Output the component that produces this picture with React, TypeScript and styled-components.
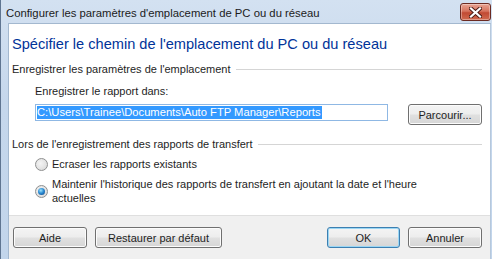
import { createGlobalStyle } from "styled-components";
import styled from "styled-components";

const GlobalStyle = createGlobalStyle`
  html, body {
    margin: 0;
    padding: 0;
    background: #ffffff;
  }
  body {
    font-family: "Liberation Sans", Arial, sans-serif;
    font-size: 11px;
    color: #1e1e1e;
  }
`;

const Window = styled.div`
  width: 492px;
  height: 259px;
  box-sizing: border-box;
  overflow: hidden;
  display: flex;
  flex-direction: column;
  background: linear-gradient(180deg, #d3e1f1 0%, #c5d7ec 40%, #c2d5eb 100%);
  border-left: 1px solid #5f7591;
  padding: 0 1px 0 7px;
`;

const TitleBar = styled.div`
  height: 23px;
  flex-shrink: 0;
  display: flex;
  align-items: center;
  justify-content: space-between;
  margin-left: -2px;
`;

const Title = styled.span`
  font-size: 11.3px;
  color: #1b1b1b;
  padding-top: 2px;
`;

const CloseButton = styled.div`
  width: 29px;
  height: 16px;
  margin-top: 1px;
  border: 1px solid #6b2a22;
  border-radius: 3px;
  display: flex;
  align-items: center;
  justify-content: center;
  background: linear-gradient(180deg, #e8a493 0%, #d6735d 45%, #c14a33 55%, #d06a4f 100%);
  box-shadow: inset 0 0 0 1px rgba(255, 255, 255, 0.35);
`;

const Content = styled.div`
  flex: 1;
  display: flex;
  flex-direction: column;
  background: #ffffff;
  border: 1px solid #a3b8cf;
  border-bottom: none;
  border-right-color: #b6c8dc;
`;

const Main = styled.div`
  flex: 1;
  display: flex;
  flex-direction: column;
  padding: 10px 8px 0 3px;
`;

const Heading = styled.h1`
  margin: 0 0 8px;
  font-weight: normal;
  font-size: 14.6px;
  line-height: 20px;
  color: #003399;
`;

const GroupHeader = styled.div`
  display: flex;
  align-items: center;
  gap: 5px;
  height: 14px;
  &::after {
    content: "";
    flex: 1;
    height: 1px;
    background: #d5d5d5;
    margin-top: 1px;
  }
`;

const Indent = styled.div<{ $top: number }>`
  display: flex;
  flex-direction: column;
  padding-left: 23px;
  margin-top: ${(p) => p.$top}px;
`;

const FieldLabel = styled.div`
  line-height: 14px;
`;

const InputRow = styled.div`
  display: flex;
  align-items: flex-start;
  justify-content: space-between;
  margin-top: 6px;
  margin-bottom: 12px;
`;

const PathInput = styled.div`
  width: 353px;
  height: 17px;
  box-sizing: border-box;
  border: 1px solid #8fb8e4;
  background: #ffffff;
  padding: 1px 1px;
  display: flex;
  align-items: center;
`;

const Selected = styled.span`
  background: #3399ff;
  color: #ffffff;
  font-size: 11.2px;
  line-height: 13px;
  padding-right: 1px;
  white-space: nowrap;
`;

const Button = styled.button<{ $width: number; $focused?: boolean }>`
  width: ${(p) => p.$width}px;
  height: 21px;
  box-sizing: border-box;
  border: 1px solid ${(p) => (p.$focused ? "#3c7fb1" : "#707070")};
  border-radius: 3px;
  background: linear-gradient(180deg, #f4f4f4 0%, #ededed 48%, #e0e0e0 52%, #d6d6d6 100%);
  box-shadow: inset 0 0 0 1px ${(p) => (p.$focused ? "#9ad6f4" : "#fcfcfc")};
  font-family: "Liberation Sans", Arial, sans-serif;
  font-size: 11px;
  font-weight: normal;
  color: #1e1e1e;
  padding: 0;
  cursor: default;
`;

const RadioRow = styled.label<{ $top: number }>`
  display: flex;
  align-items: center;
  gap: 4px;
  margin-top: ${(p) => p.$top}px;
  line-height: 14px;
`;

const RadioCircle = styled.span<{ $checked?: boolean }>`
  width: 13px;
  height: 13px;
  box-sizing: border-box;
  flex-shrink: 0;
  border-radius: 50%;
  border: 1px solid #8e8f8f;
  background: radial-gradient(circle at 40% 40%, #f4f4f4 0%, #e2e2e2 60%, #d0d0d0 100%);
  display: flex;
  align-items: center;
  justify-content: center;
  &::after {
    content: "";
    display: ${(p) => (p.$checked ? "block" : "none")};
    width: 7px;
    height: 7px;
    border-radius: 50%;
    background: radial-gradient(circle at 40% 35%, #9fe3fb 0%, #2c8cd4 45%, #0c3e7e 100%);
  }
`;

const Footer = styled.div`
  height: 44px;
  box-sizing: border-box;
  flex-shrink: 0;
  background: #f0f0f0;
  border-top: 1px solid #dfdfdf;
  display: flex;
  align-items: flex-start;
  padding: 11px 8px 0 4px;
  gap: 8px;
`;

const Spacer = styled.div`
  flex: 1;
`;

export default function App() {
  return (
    <>
      <GlobalStyle />
      <Window>
        <TitleBar>
          <Title>Configurer les paramètres d'emplacement de PC ou du réseau</Title>
          <CloseButton>
            <svg width="13" height="11" viewBox="0 0 13 11">
              <path
                d="M2 1.5 L6.5 5.5 L11 1.5 M2 9.5 L6.5 5.5 L11 9.5"
                stroke="#4a1a14"
                strokeWidth="4"
                fill="none"
                strokeLinecap="square"
              />
              <path
                d="M2 1.5 L6.5 5.5 L11 1.5 M2 9.5 L6.5 5.5 L11 9.5"
                stroke="#ffffff"
                strokeWidth="2.2"
                fill="none"
                strokeLinecap="square"
              />
            </svg>
          </CloseButton>
        </TitleBar>
        <Content>
          <Main>
            <Heading>Spécifier le chemin de l'emplacement du PC ou du réseau</Heading>
            <GroupHeader>Enregistrer les paramètres de l'emplacement</GroupHeader>
            <Indent $top={8}>
              <FieldLabel>Enregistrer le rapport dans:</FieldLabel>
              <InputRow>
                <PathInput>
                  <Selected>C:\Users\Trainee\Documents\Auto FTP Manager\Reports</Selected>
                </PathInput>
                <Button $width={74}>Parcourir...</Button>
              </InputRow>
            </Indent>
            <GroupHeader>Lors de l'enregistrement des rapports de transfert</GroupHeader>
            <Indent $top={6}>
              <RadioRow $top={0}>
                <RadioCircle />
                Ecraser les rapports existants
              </RadioRow>
              <RadioRow $top={6}>
                <RadioCircle $checked />
                <span>
                  Maintenir l'historique des rapports de transfert en ajoutant la date et l'heure
                  <br />
                  actuelles
                </span>
              </RadioRow>
            </Indent>
          </Main>
          <Footer>
            <Button $width={74}>Aide</Button>
            <Button $width={127}>Restaurer par défaut</Button>
            <Spacer />
            <Button $width={73} $focused>
              OK
            </Button>
            <Button $width={74}>Annuler</Button>
          </Footer>
        </Content>
      </Window>
    </>
  );
}
